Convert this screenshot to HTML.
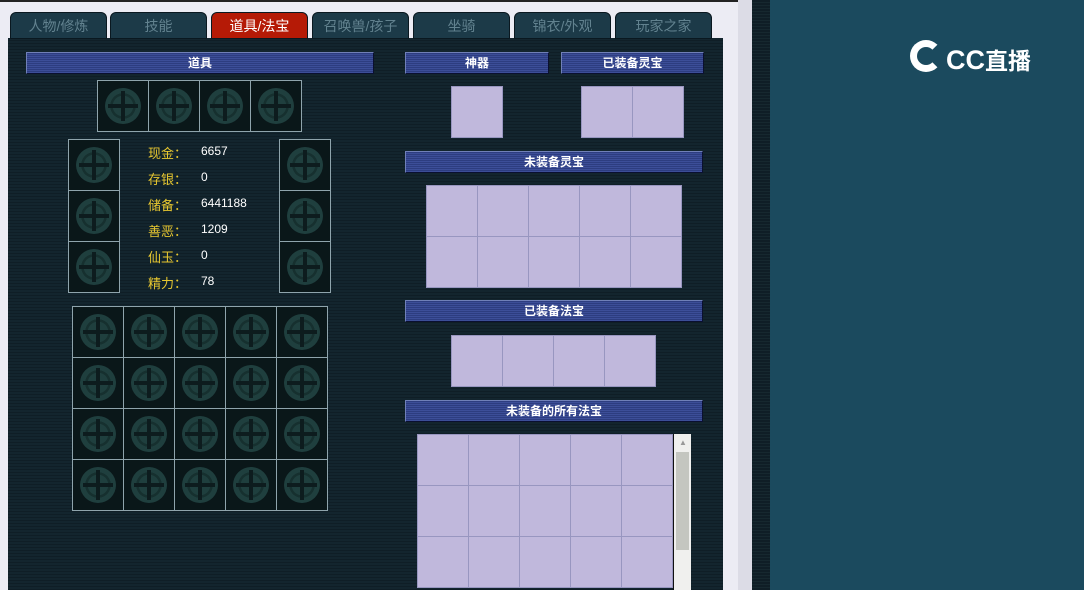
<!DOCTYPE html>
<html><head><meta charset="utf-8"><style>
*{margin:0;padding:0;box-sizing:border-box}
body{width:1084px;height:590px;overflow:hidden;position:relative;background:#ececf4;font-family:"Liberation Sans","Noto Sans CJK SC",sans-serif}
.a{position:absolute}
.panel{left:8px;top:38px;width:715px;height:552px;background:repeating-linear-gradient(#13252e 0 2px,#0f1e26 2px 3px)}
.tab{top:12px;height:27px;width:97px;border-radius:6px 6px 0 0;background:#1c3a48;border:1px solid #0a1820;color:#62828f;font-size:14px;text-align:center;line-height:26px}
.tab.on{background:#b51a06;color:#fff}
.hd{height:22px;background:repeating-linear-gradient(#2d3d80 0 1px,#3c4e98 1px 2px);border:1px solid #7080b8;border-bottom-color:#0a1030;border-right-color:#0a1030;color:#fff;font-weight:bold;font-size:12px;text-align:center;line-height:20px}
.g{display:grid;border-top:1px solid #8fa4ac;border-left:1px solid #8fa4ac}
.c{width:51px;height:51px;border-right:1px solid #8fa4ac;border-bottom:1px solid #8fa4ac;background:#0a1719;position:relative}
.c::after{content:"";position:absolute;left:7px;top:7px;width:36px;height:36px;border-radius:50%;background:
linear-gradient(#0d1c1e,#0d1c1e) 16px 3px/4px 30px no-repeat,
linear-gradient(#0d1c1e,#0d1c1e) 3px 16px/30px 4px no-repeat,
radial-gradient(circle,#1f3f3e 0 40%,#16302f 41% 50%,#1f3f3e 51% 70%,#1a3534 71%)}
.l{display:grid;border-top:1px solid #9896c0;border-left:1px solid #9896c0}
.l div{width:51px;height:51px;background:#c0b8dc;border-right:1px solid #9896c0;border-bottom:1px solid #9896c0}
.lb{color:#e8c830;font-size:13px;left:148px}
.v{color:#fff;font-size:12px;left:201px}
</style></head><body>
<div class="a" style="left:0;top:0;width:1084px;height:2px;background:#222"></div>
<div class="a" style="left:738px;top:0;width:14px;height:590px;background:#dcdce6"></div>
<div class="a" style="left:752px;top:0;width:18px;height:590px;background:repeating-linear-gradient(#0f1e26 0 2px,#16282f 2px 3px)"></div>
<div class="a" style="left:770px;top:0;width:314px;height:590px;background:#1b4a5e"></div>
<div class="a" style="left:908px;top:38px;width:36px;height:40px;"><div class="a" style="left:2px;top:2px;width:32px;height:32px;border-radius:50%;border:7px solid #fff;border-right-color:transparent"></div></div>
<div class="a" style="left:946px;top:40px;color:#fff;font-size:27px;line-height:40px;font-weight:bold">CC<span style="font-size:23px">直播</span></div>
<div class="a panel"></div>
<div class="a tab" style="left:10px">人物/修炼</div>
<div class="a tab" style="left:110px">技能</div>
<div class="a tab on" style="left:211px">道具/法宝</div>
<div class="a tab" style="left:312px">召唤兽/孩子</div>
<div class="a tab" style="left:413px">坐骑</div>
<div class="a tab" style="left:514px">锦衣/外观</div>
<div class="a tab" style="left:615px">玩家之家</div>
<div class="a hd" style="left:26px;top:52px;width:348px">道具</div>
<div class="a hd" style="left:405px;top:52px;width:144px">神器</div>
<div class="a hd" style="left:561px;top:52px;width:143px">已装备灵宝</div>
<div class="a hd" style="left:405px;top:151px;width:298px">未装备灵宝</div>
<div class="a hd" style="left:405px;top:300px;width:298px">已装备法宝</div>
<div class="a hd" style="left:405px;top:400px;width:298px">未装备的所有法宝</div>
<div class="a g" style="left:97px;top:80px;grid-template-columns:repeat(4,51px)"><div class="c"></div><div class="c"></div><div class="c"></div><div class="c"></div></div>
<div class="a g" style="left:68px;top:139px;grid-template-columns:51px"><div class="c"></div><div class="c"></div><div class="c"></div></div>
<div class="a g" style="left:279px;top:139px;grid-template-columns:51px"><div class="c"></div><div class="c"></div><div class="c"></div></div>
<div class="a g" style="left:72px;top:306px;grid-template-columns:repeat(5,51px)">
<div class="c"></div><div class="c"></div><div class="c"></div><div class="c"></div><div class="c"></div>
<div class="c"></div><div class="c"></div><div class="c"></div><div class="c"></div><div class="c"></div>
<div class="c"></div><div class="c"></div><div class="c"></div><div class="c"></div><div class="c"></div>
<div class="c"></div><div class="c"></div><div class="c"></div><div class="c"></div><div class="c"></div></div>
<div class="a lb" style="top:143px">现金：</div><div class="a v" style="top:144px">6657</div>
<div class="a lb" style="top:169px">存银：</div><div class="a v" style="top:170px">0</div>
<div class="a lb" style="top:195px">储备：</div><div class="a v" style="top:196px">6441188</div>
<div class="a lb" style="top:221px">善恶：</div><div class="a v" style="top:222px">1209</div>
<div class="a lb" style="top:247px">仙玉：</div><div class="a v" style="top:248px">0</div>
<div class="a lb" style="top:273px">精力：</div><div class="a v" style="top:274px">78</div>
<div class="a l" style="left:451px;top:86px;grid-template-columns:51px"><div></div></div>
<div class="a l" style="left:581px;top:86px;grid-template-columns:repeat(2,51px)"><div></div><div></div></div>
<div class="a l" style="left:426px;top:185px;grid-template-columns:repeat(5,51px)"><div></div><div></div><div></div><div></div><div></div><div></div><div></div><div></div><div></div><div></div></div>
<div class="a l" style="left:451px;top:335px;grid-template-columns:repeat(4,51px)"><div></div><div></div><div></div><div></div></div>
<div class="a l" style="left:417px;top:434px;grid-template-columns:repeat(5,51px)"><div></div><div></div><div></div><div></div><div></div><div></div><div></div><div></div><div></div><div></div><div></div><div></div><div></div><div></div><div></div></div>
<div class="a" style="left:673px;top:434px;width:18px;height:156px;background:#f0f0ee;border-left:1px solid #111"></div>
<div class="a" style="left:676px;top:452px;width:13px;height:98px;background:#c4c6c0"></div>
<div class="a" style="left:679px;top:438px;color:#999;font-size:8px">▲</div>
</body></html>
